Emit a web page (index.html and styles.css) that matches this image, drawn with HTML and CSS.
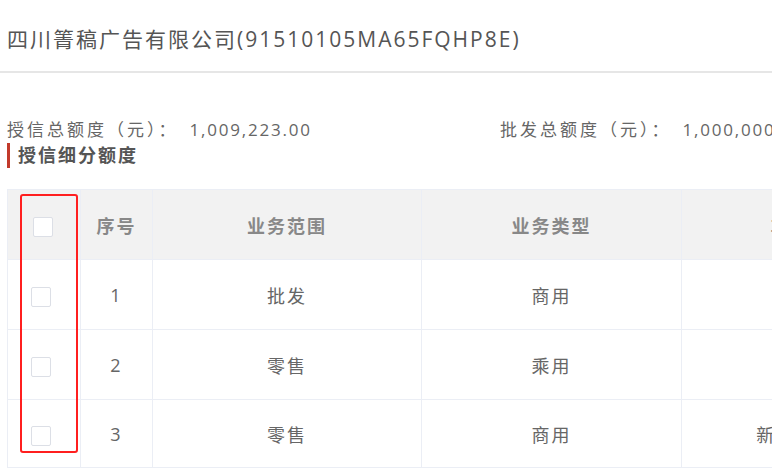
FILE: index.html
```html
<!DOCTYPE html>
<html lang="zh-CN">
<head>
<meta charset="utf-8">
<title>授信详情</title>
<link rel="stylesheet" href="styles.css">
</head>
<body>
<div class="page">
  <div class="header">
    <h1 class="title">四川箐稿广告有限公司(91510105MA65FQHP8E)</h1>
  </div>
  <div class="content">
    <div class="info-row">
      <div class="info-item info-first"><span class="label">授信总额度（元）：</span>1,009,223.00</div>
      <div class="info-item"><span class="label">批发总额度（元）：</span>1,000,000.00</div>
    </div>
    <h2 class="section-title">授信细分额度</h2>
    <div class="table-wrap">
      <table class="grid">
        <colgroup>
          <col class="c-check">
          <col class="c-no">
          <col class="c-scope">
          <col class="c-type">
          <col class="c-car">
          <col class="c-amt">
        </colgroup>
        <thead>
          <tr>
            <th><span class="checkbox"></span></th>
            <th>序号</th>
            <th>业务范围</th>
            <th>业务类型</th>
            <th>车辆类型</th>
            <th>授信额度</th>
          </tr>
        </thead>
        <tbody>
          <tr>
            <td><span class="checkbox body-box"></span></td>
            <td>1</td>
            <td>批发</td>
            <td>商用</td>
            <td>新车</td>
            <td>1,000,000.00</td>
          </tr>
          <tr>
            <td><span class="checkbox body-box"></span></td>
            <td>2</td>
            <td>零售</td>
            <td>乘用</td>
            <td>二手车</td>
            <td>5,000.00</td>
          </tr>
          <tr>
            <td><span class="checkbox body-box"></span></td>
            <td>3</td>
            <td>零售</td>
            <td>商用</td>
            <td>新车/二手车</td>
            <td>4,223.00</td>
          </tr>
        </tbody>
      </table>
      <div class="highlight"></div>
    </div>
  </div>
</div>
</body>
</html>
```

FILE: styles.css
```css
html, body {
  margin: 0;
  padding: 0;
  background: #fff;
}
body {
  font-family: "Open Sans", "Noto Sans CJK SC", sans-serif;
  color: #666;
}
.page {
  width: 772px;
  height: 473px;
  overflow: hidden;
}
.header {
  padding: 24px 7px 17px;
  border-bottom: 2px solid #e6e6e6;
}
.title {
  margin: 0;
  font-size: 21px;
  font-weight: 400;
  line-height: 30px;
  letter-spacing: 2px;
  color: #555;
  white-space: nowrap;
}
.content {
  padding: 45px 0 0 7px;
}
.info-row {
  display: flex;
  white-space: nowrap;
}
.info-item {
  font-size: 17px;
  line-height: 24px;
  letter-spacing: 1.8px;
  color: #666;
}
.label {
  letter-spacing: 3px;
  margin-right: 11px;
}
.info-first {
  width: 493px;
  flex: none;
}
.section-title {
  margin: 1px 0 0;
  font-size: 18px;
  font-weight: 700;
  line-height: 25px;
  letter-spacing: 2px;
  color: #555;
  border-left: 3px solid #c23a2b;
  padding-left: 8px;
}
.table-wrap {
  position: relative;
  margin-top: 21px;
}
.grid {
  border-collapse: collapse;
  table-layout: fixed;
  width: 1200px;
  font-size: 18px;
  letter-spacing: 2px;
}
.c-check { width: 73px; }
.c-no { width: 72px; }
.c-scope { width: 269px; }
.c-type { width: 260px; }
.c-car { width: 258px; }
.c-amt { width: 268px; }
.grid th,
.grid td {
  border: 1px solid #ebeef5;
  text-align: center;
  vertical-align: middle;
  padding: 0;
  white-space: nowrap;
}
.grid th {
  height: 69px;
  background: #f2f2f2;
  color: #888;
  font-weight: 700;
}
.grid td {
  height: 69px;
  color: #666;
}
.grid tbody tr:last-child td {
  height: 67px;
}
.checkbox {
  display: inline-block;
  width: 18px;
  height: 18px;
  border: 1px solid #dcdfe6;
  border-radius: 2px;
  background: #fff;
  vertical-align: middle;
  margin-left: -2px;
}
.body-box {
  margin-left: -6px;
}
.highlight {
  position: absolute;
  left: 13px;
  top: 5px;
  width: 54px;
  height: 255px;
  border: 2px solid #ff1f1f;
  border-radius: 3px;
}
```
